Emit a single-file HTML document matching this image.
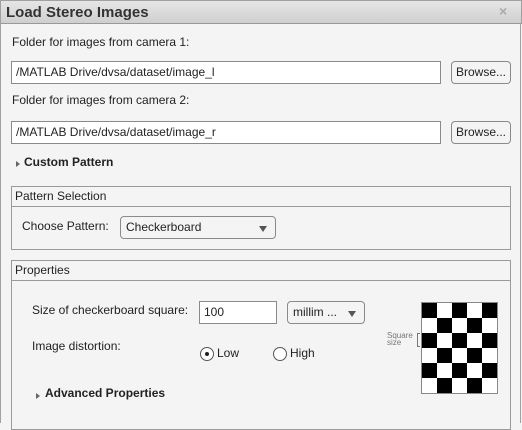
<!DOCTYPE html>
<html><head><style>
*{box-sizing:border-box;margin:0;padding:0}
body{width:522px;height:423px;overflow:hidden;background:#f4f4f4;font-family:"Liberation Sans",sans-serif;font-size:12px;color:#222;position:relative}
.a{position:absolute}
#frame{left:0;top:0;width:521px;height:423px;border:1px solid #a0a0a0;border-bottom:none}
#title{left:0;top:0;width:522px;height:24px;background:linear-gradient(#e6e6e6,#cfcfcf);border:1px solid #a0a0a0;border-bottom:1px solid #999}
#title span{position:absolute;left:5px;top:3px;font-weight:bold;font-size:15px;color:#333}
.inp{background:#fff;border:1px solid #8a8a8a;height:23px;padding:3px 4px;font-size:12px}
.btn{border:1px solid #8a8a8a;border-radius:4px;background:#f4f4f4;height:23px;padding:3px 4px;font-size:12px}
.dd{border:1px solid #8a8a8a;border-radius:4px;background:#f4f4f4;height:23px;padding:3px 5px;font-size:12px}
.dd i{position:absolute;right:8px;top:9px;border-left:4px solid transparent;border-right:4px solid transparent;border-top:6px solid #555}
.panel{border:1px solid #9a9a9a}
.ph{position:absolute;left:0;right:0;top:0;height:20px;border-bottom:1px solid #9a9a9a;padding:2px 3px;font-size:12px}
.tri{border-top:3px solid transparent;border-bottom:3px solid transparent;border-left:4px solid #666}
.b{font-weight:bold}
.rad{width:14px;height:14px;border:1px solid #555;border-radius:50%;background:#fff}
</style></head><body>
<div class="a" id="frame"></div>
<div class="a" id="title"><span>Load Stereo Images</span><span style="left:498px;top:2px;color:#aaa;font-weight:bold;font-size:14px">×</span></div>
<div class="a" style="left:12px;top:35px">Folder for images from camera 1:</div>
<div class="a inp" style="left:11px;top:61px;width:430px">/MATLAB Drive/dvsa/dataset/image_l</div>
<div class="a btn" style="left:451px;top:61px;width:60px">Browse...</div>
<div class="a" style="left:12px;top:93px">Folder for images from camera 2:</div>
<div class="a inp" style="left:11px;top:121px;width:430px">/MATLAB Drive/dvsa/dataset/image_r</div>
<div class="a btn" style="left:451px;top:121px;width:60px">Browse...</div>
<div class="a tri" style="left:16px;top:161px"></div>
<div class="a b" style="left:24px;top:155px">Custom Pattern</div>

<div class="a panel" style="left:11px;top:186px;width:500px;height:64px"><div class="ph">Pattern Selection</div></div>
<div class="a" style="left:22px;top:219px">Choose Pattern:</div>
<div class="a dd" style="left:120px;top:216px;width:156px">Checkerboard<i></i></div>

<div class="a panel" style="left:11px;top:260px;width:500px;height:170px"><div class="ph">Properties</div></div>
<div class="a" style="left:32px;top:303px">Size of checkerboard square:</div>
<div class="a inp" style="left:199px;top:301px;width:78px">100</div>
<div class="a dd" style="left:287px;top:301px;width:78px">millim ...<i></i></div>
<div class="a" style="left:32px;top:339px">Image distortion:</div>
<div class="a rad" style="left:200px;top:347px"><div style="position:absolute;left:4px;top:4px;width:4px;height:4px;border-radius:50%;background:#222"></div></div>
<div class="a" style="left:217px;top:346px">Low</div>
<div class="a rad" style="left:273px;top:347px"></div>
<div class="a" style="left:290px;top:346px">High</div>
<div class="a tri" style="left:36px;top:393px"></div>
<div class="a b" style="left:45px;top:386px">Advanced Properties</div>
<div class="a" style="left:387px;top:332px;font-size:8px;line-height:7px;color:#777">Square<br>size</div>
<div class="a" style="left:417px;top:333px;width:3px;height:14px;border:1px solid #777;border-right:none"></div>
<svg class="a" style="left:421px;top:302px" width="77" height="92" viewBox="0 0 77 92">
<rect x="0" y="0" width="77" height="92" fill="#fff"/>
<g fill="#000">
<rect x="1" y="1" width="15" height="15"/><rect x="31" y="1" width="15" height="15"/><rect x="61" y="1" width="15" height="15"/>
<rect x="16" y="16" width="15" height="15"/><rect x="46" y="16" width="15" height="15"/>
<rect x="1" y="31" width="15" height="15"/><rect x="31" y="31" width="15" height="15"/><rect x="61" y="31" width="15" height="15"/>
<rect x="16" y="46" width="15" height="15"/><rect x="46" y="46" width="15" height="15"/>
<rect x="1" y="61" width="15" height="15"/><rect x="31" y="61" width="15" height="15"/><rect x="61" y="61" width="15" height="15"/>
<rect x="16" y="76" width="15" height="15"/><rect x="46" y="76" width="15" height="15"/>
</g>
<rect x="0.5" y="0.5" width="76" height="91" fill="none" stroke="#888"/>
</svg>
</body></html>
